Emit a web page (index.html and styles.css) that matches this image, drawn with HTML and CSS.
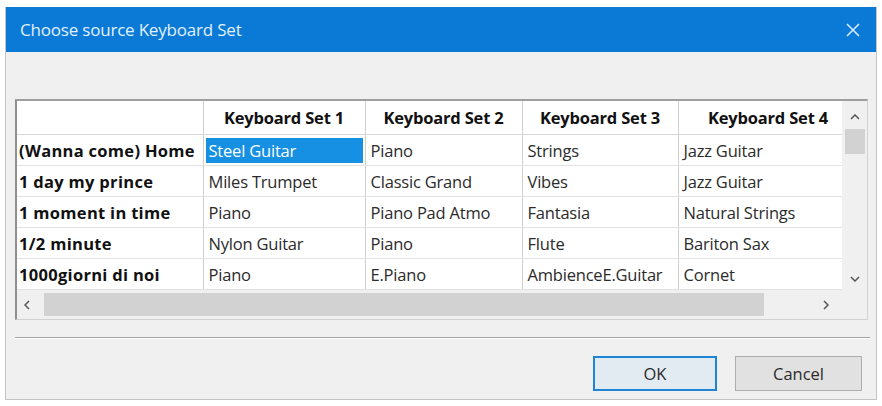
FILE: index.html
```html
<!DOCTYPE html>
<html lang="en">
<head>
    <meta charset="UTF-8">
    <title>Choose source Keyboard Set</title>
    <link rel="stylesheet" href="styles.css">
</head>
<body>

    <div class="dialog">
        <div class="titlebar">
            <span class="title">Choose source Keyboard Set</span>
            <svg class="close" width="14" height="14" viewBox="0 0 14 14">
                <path d="M1 1 L13 13 M13 1 L1 13" stroke="#d6ecff" stroke-width="1.6" fill="none"/>
            </svg>
        </div>

        <div class="client">
            <!-- Grid with the keyboard sets per song -->
            <div class="grid-frame">
                <div class="grid-top">
                    <div class="grid-view">
                        <table class="grid">
                            <colgroup>
                                <col style="width: 186px">
                                <col style="width: 162px">
                                <col style="width: 157px">
                                <col style="width: 156px">
                                <col style="width: 180px">
                            </colgroup>
                            <tr class="head">
                                <th></th>
                                <th>Keyboard Set 1</th>
                                <th>Keyboard Set 2</th>
                                <th>Keyboard Set 3</th>
                                <th>Keyboard Set 4</th>
                            </tr>
                            <tr>
                                <th class="song">(Wanna come) Home</th>
                                <td class="selected"><span>Steel Guitar</span></td>
                                <td>Piano</td>
                                <td>Strings</td>
                                <td>Jazz Guitar</td>
                            </tr>
                            <tr>
                                <th class="song">1 day my prince</th>
                                <td>Miles Trumpet</td>
                                <td>Classic Grand</td>
                                <td>Vibes</td>
                                <td>Jazz Guitar</td>
                            </tr>
                            <tr>
                                <th class="song">1 moment in time</th>
                                <td>Piano</td>
                                <td>Piano Pad Atmo</td>
                                <td>Fantasia</td>
                                <td>Natural Strings</td>
                            </tr>
                            <tr>
                                <th class="song">1/2 minute</th>
                                <td>Nylon Guitar</td>
                                <td>Piano</td>
                                <td>Flute</td>
                                <td>Bariton Sax</td>
                            </tr>
                            <tr>
                                <th class="song">1000giorni di noi</th>
                                <td>Piano</td>
                                <td>E.Piano</td>
                                <td>AmbienceE.Guitar</td>
                                <td>Cornet</td>
                            </tr>
                        </table>
                    </div>

                    <!-- vertical scrollbar -->
                    <div class="vscroll">
                        <svg class="arrow" width="10" height="6" viewBox="0 0 10 6">
                            <path d="M1 5 L5 1 L9 5" stroke="#555" stroke-width="1.5" fill="none"/>
                        </svg>
                        <div class="vthumb"></div>
                        <div class="vtrack"></div>
                        <svg class="arrow" width="10" height="6" viewBox="0 0 10 6">
                            <path d="M1 1 L5 5 L9 1" stroke="#555" stroke-width="1.5" fill="none"/>
                        </svg>
                    </div>
                </div>

                <!-- horizontal scrollbar -->
                <div class="hscroll">
                    <svg class="arrow left" width="6" height="10" viewBox="0 0 6 10">
                        <path d="M5 1 L1 5 L5 9" stroke="#555" stroke-width="1.5" fill="none"/>
                    </svg>
                    <div class="hthumb"></div>
                    <div class="htrack"></div>
                    <svg class="arrow right" width="6" height="10" viewBox="0 0 6 10">
                        <path d="M1 1 L5 5 L1 9" stroke="#555" stroke-width="1.5" fill="none"/>
                    </svg>
                    <div class="corner"></div>
                </div>
            </div>

            <div class="separator"></div>

            <div class="buttons">
                <button class="btn default">OK</button>
                <button class="btn">Cancel</button>
            </div>
        </div>
    </div>

</body>
</html>
```

FILE: styles.css
```css
body {
    margin: 0;
    background-color: #ffffff;
    font-family: "Open Sans", "Noto Sans", sans-serif;
}
.dialog {
    margin: 7px 0 0 5px;
    width: 870px;
    height: 392px;
    border: 1px solid #c4c4c4;
    border-top: none;
    background-color: #f0f0f0;
    display: flex;
    flex-direction: column;
}
.titlebar {
    height: 45px;
    background-color: #0a7ad6;
    display: flex;
    align-items: center;
    justify-content: space-between;
    padding: 0 16px 0 14px;
}
.title {
    color: #e2f1ff;
    font-size: 17px;
    letter-spacing: -0.2px;
}
.close {
    margin-top: 1px;
}
.client {
    padding: 47px 0 0 9px;
}
.grid-frame {
    width: 850px;
    border-top: 2px solid #9e9e9e;
    border-left: 2px solid #8f8f8f;
    border-right: 1px solid #d2d2d2;
    border-bottom: 1px solid #d2d2d2;
    background-color: #ffffff;
}
.grid-top {
    display: flex;
    height: 189px;
}
.grid-view {
    width: 825px;
    overflow: hidden;
}
.grid {
    table-layout: fixed;
    width: 841px;
    border-collapse: collapse;
    font-size: 16.5px;
    color: #2b2b2b;
}
.grid th, .grid td {
    height: 30px;
    padding: 0 5px;
    border-right: 1px solid #cfcfcf;
    border-bottom: 1px solid #e2e2e2;
    white-space: nowrap;
    overflow: hidden;
    text-align: left;
    letter-spacing: -0.2px;
}
.grid tr.head th {
    height: 33px;
    text-align: center;
    font-weight: bold;
    color: #111;
    border-bottom: 1px solid #d8d8d8;
}
.grid th.song {
    padding-left: 2px;
    font-weight: bold;
    color: #111;
    letter-spacing: 0.3px;
}
.grid td.selected {
    padding: 0 2px;
}
.grid td.selected span {
    display: block;
    height: 25px;
    line-height: 25px;
    padding-left: 3px;
    background-color: #1590e3;
    color: #ffffff;
}
.vscroll {
    width: 25px;
    background-color: #f0f0f0;
    display: flex;
    flex-direction: column;
    align-items: center;
}
.vscroll .arrow {
    margin: 13px 0 9px;
}
.vscroll .arrow:last-child {
    margin: 0 0 8px;
}
.vthumb {
    width: 20px;
    height: 25px;
    background-color: #d2d2d2;
}
.vtrack {
    flex: 1;
}
.hscroll {
    height: 29px;
    display: flex;
    align-items: center;
    background-color: #f0f0f0;
}
.hscroll .arrow.left {
    margin: 0 14px 0 7px;
}
.hthumb {
    width: 720px;
    height: 23px;
    background-color: #d2d2d2;
}
.htrack {
    flex: 1;
}
.hscroll .arrow.right {
    margin: 0 13px 0 0;
}
.corner {
    width: 25px;
    height: 100%;
    background-color: #f0f0f0;
}
.separator {
    width: 855px;
    margin-top: 17px;
    border-top: 1px solid #a3a3a3;
    border-bottom: 1px solid #ffffff;
}
.buttons {
    display: flex;
    justify-content: flex-end;
    gap: 18px;
    padding: 17px 14px 0 0;
}
.btn {
    width: 127px;
    height: 35px;
    font-family: "Open Sans", "Noto Sans", sans-serif;
    font-size: 16.5px;
    color: #2a2a2a;
    background-color: #e1e1e1;
    border: 1px solid #adadad;
}
.btn.default {
    width: 124px;
    background-color: #e3ebf2;
    border: 2px solid #1f84d2;
}
```
